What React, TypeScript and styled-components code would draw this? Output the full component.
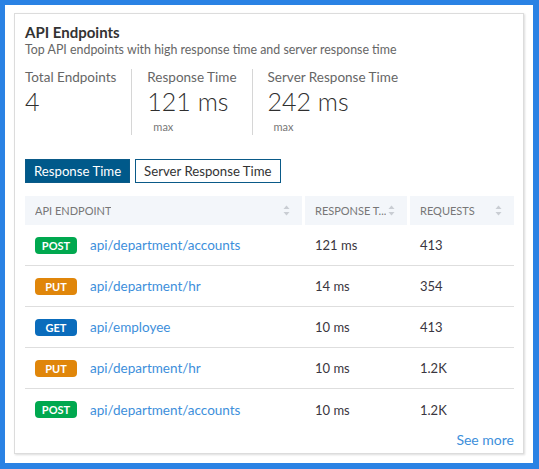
import React from 'react';
import styled, { createGlobalStyle } from 'styled-components';

const GlobalStyle = createGlobalStyle`
  html, body {
    margin: 0;
    padding: 0;
    background: #2a82e4;
  }
  body {
    font-family: Lato, "Open Sans", "Liberation Sans", sans-serif;
    color: #333;
  }
`;

const Frame = styled.div`
  background: #fff;
  margin: 5px 6px 6px 5px;
  height: 458px;
  box-sizing: border-box;
  padding: 8px 9px;
`;

const Card = styled.section`
  background: #fff;
  border: 1px solid #dcdcdc;
  box-shadow: 1px 1px 2px rgba(0, 0, 0, 0.14);
  padding: 9px 9px 4px 10px;
  box-sizing: border-box;
  height: 441px;
  display: flex;
  flex-direction: column;
`;

const Title = styled.h2`
  margin: 0;
  font-size: 15px;
  line-height: 18px;
  font-weight: 700;
  color: #333;
`;

const Subtitle = styled.p`
  margin: 1px 0 0;
  font-size: 12.4px;
  line-height: 16px;
  color: #666;
`;

const Stats = styled.div`
  display: flex;
  margin-top: 11px;
`;

const Stat = styled.div`
  padding: 0 15px;
  border-left: 1px solid #d6d6d6;
  height: 66px;
  box-sizing: border-box;

  &:first-child {
    padding-left: 0;
    border-left: none;
  }
`;

const StatLabel = styled.div`
  font-size: 13.5px;
  line-height: 17px;
  color: #666;
`;

const StatValue = styled.div`
  font-size: 25px;
  line-height: 30px;
  font-weight: 300;
  color: #2f2f2f;
`;

const StatNote = styled.div`
  margin-top: 3px;
  padding-left: 6px;
  font-size: 11px;
  line-height: 16px;
  color: #777;
`;

const Tabs = styled.div`
  display: flex;
  gap: 5px;
  margin-top: 24px;
`;

const Tab = styled.button<{ $active?: boolean }>`
  font-family: inherit;
  font-size: 13.2px;
  height: 24px;
  padding: 0 8px;
  margin: 0;
  border: 1px solid #0a5a88;
  background: ${(p) => (p.$active ? '#00598a' : '#fff')};
  color: ${(p) => (p.$active ? '#fff' : '#333')};
  cursor: pointer;
`;

const Table = styled.div`
  margin-top: 13px;
`;

const HeadRow = styled.div`
  display: grid;
  grid-template-columns: 277px 102px 104px;
  column-gap: 3px;
`;

const HeadCell = styled.div`
  height: 29px;
  background: #f3f6fa;
  display: flex;
  align-items: center;
  justify-content: space-between;
  padding: 0 12px 0 10px;
  font-size: 11px;
  color: #777;
  text-transform: uppercase;
  white-space: nowrap;
  overflow: hidden;
`;

const HeadText = styled.span`
  overflow: hidden;
  text-overflow: ellipsis;
`;

const Row = styled.div`
  display: grid;
  grid-template-columns: 277px 102px 104px;
  column-gap: 3px;
  height: 41px;
  box-sizing: border-box;
  align-items: center;
  border-bottom: 1px solid #dedede;

  &:last-child {
    border-bottom: none;
  }
`;

const Cell = styled.div`
  padding-left: 10px;
  font-size: 13px;
  color: #3a3640;
  display: flex;
  align-items: center;
  gap: 13px;
`;

const methodColors: Record<string, string> = {
  POST: '#00a84f',
  PUT: '#e0860a',
  GET: '#0a6cbc',
};

const Badge = styled.span<{ $method: string }>`
  width: 42px;
  height: 17px;
  border-radius: 4px;
  background: ${(p) => methodColors[p.$method]};
  color: #fff;
  font-size: 11px;
  font-weight: 700;
  display: inline-flex;
  align-items: center;
  justify-content: center;
`;

const EndpointLink = styled.a`
  color: #3d8fdb;
  text-decoration: none;
  font-size: 13.5px;
`;

const Footer = styled.div`
  margin-top: auto;
  text-align: right;
  line-height: 18px;
  padding-bottom: 6px;
`;

const SeeMore = styled.a`
  color: #3d8fdb;
  font-size: 14px;
  text-decoration: none;
`;

const SortIcon = () => (
  <svg width="7" height="11" viewBox="0 0 7 11" aria-hidden="true">
    <path d="M3.5 0.5 L6.5 4 H0.5 Z" fill="#c9cdd3" />
    <path d="M3.5 10.5 L6.5 7 H0.5 Z" fill="#c9cdd3" />
  </svg>
);

const rows = [
  { method: 'POST', path: 'api/department/accounts', time: '121 ms', requests: '413' },
  { method: 'PUT', path: 'api/department/hr', time: '14 ms', requests: '354' },
  { method: 'GET', path: 'api/employee', time: '10 ms', requests: '413' },
  { method: 'PUT', path: 'api/department/hr', time: '10 ms', requests: '1.2K' },
  { method: 'POST', path: 'api/department/accounts', time: '10 ms', requests: '1.2K' },
];

export default function App() {
  return (
    <>
      <GlobalStyle />
      <Frame>
        <Card>
          <Title>API Endpoints</Title>
          <Subtitle>Top API endpoints with high response time and server response time</Subtitle>

          <Stats>
            <Stat>
              <StatLabel>Total Endpoints</StatLabel>
              <StatValue>4</StatValue>
            </Stat>
            <Stat>
              <StatLabel>Response Time</StatLabel>
              <StatValue>121 ms</StatValue>
              <StatNote>max</StatNote>
            </Stat>
            <Stat>
              <StatLabel>Server Response Time</StatLabel>
              <StatValue>242 ms</StatValue>
              <StatNote>max</StatNote>
            </Stat>
          </Stats>

          <Tabs>
            <Tab $active>Response Time</Tab>
            <Tab>Server Response Time</Tab>
          </Tabs>

          <Table>
            <HeadRow>
              <HeadCell>
                <HeadText>API Endpoint</HeadText>
                <SortIcon />
              </HeadCell>
              <HeadCell>
                <HeadText>Response T...</HeadText>
                <SortIcon />
              </HeadCell>
              <HeadCell>
                <HeadText>Requests</HeadText>
                <SortIcon />
              </HeadCell>
            </HeadRow>
            {rows.map((r, i) => (
              <Row key={i}>
                <Cell>
                  <Badge $method={r.method}>{r.method}</Badge>
                  <EndpointLink href="#">{r.path}</EndpointLink>
                </Cell>
                <Cell>{r.time}</Cell>
                <Cell>{r.requests}</Cell>
              </Row>
            ))}
          </Table>

          <Footer>
            <SeeMore href="#">See more</SeeMore>
          </Footer>
        </Card>
      </Frame>
    </>
  );
}
